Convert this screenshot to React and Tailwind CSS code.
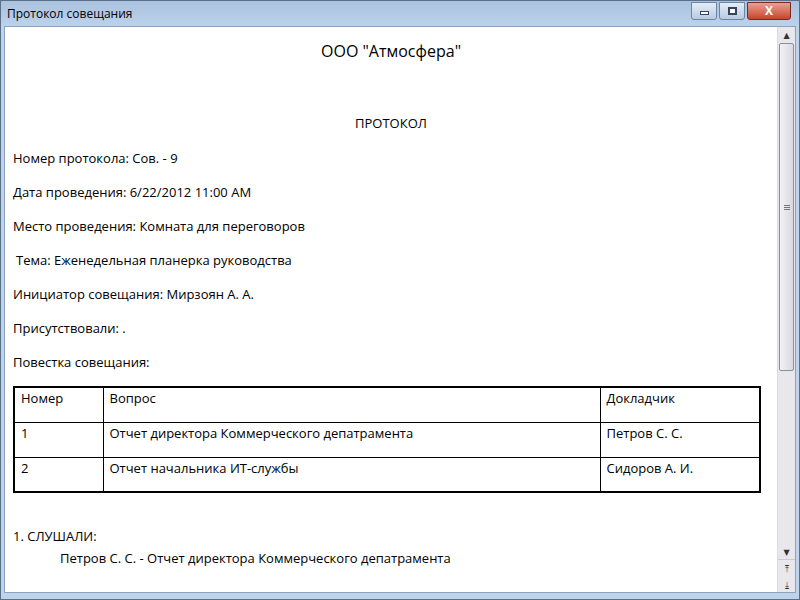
export default function App() {
  const f = { fontFamily: '"Open Sans", "DejaVu Sans", sans-serif' };
  const rows = [
    ["Номер", "Вопрос", "Докладчик"],
    ["1", "Отчет директора Коммерческого депатрамента", "Петров С. С."],
    ["2", "Отчет начальника ИТ-службы", "Сидоров А. И."],
  ];
  return (
    <div className="w-[800px] h-[600px] bg-[#bfd3ea] flex flex-col overflow-hidden border border-[#5a6f88]" style={f}>
      <div className="h-[25px] flex items-center justify-between pl-[6px] pr-[8px] bg-gradient-to-b from-[#a9c2de] to-[#bcd2ec] shrink-0">
        <span className="text-[12px] text-black">Протокол совещания</span>
        <div className="flex gap-[2px] -mt-[5px]">
          <div className="w-[26px] h-[18px] rounded-b-[3px] border border-[#6d86a3] bg-gradient-to-b from-[#e4edf7] to-[#b8cbe2] flex items-center justify-center">
            <div className="w-[9px] h-[4px] border border-[#33465c] bg-white mt-[4px]" />
          </div>
          <div className="w-[26px] h-[18px] rounded-b-[3px] border border-[#6d86a3] bg-gradient-to-b from-[#e4edf7] to-[#b8cbe2] flex items-center justify-center">
            <div className="w-[9px] h-[8px] border-2 border-[#33465c] bg-white" />
          </div>
          <div className="w-[44px] h-[18px] rounded-b-[3px] border border-[#7a2a1f] bg-gradient-to-b from-[#e8a08f] to-[#c6422d] flex items-center justify-center text-white font-bold text-[12px]">
            X
          </div>
        </div>
      </div>
      <div className="flex-1 flex mx-[3px] mb-[6px] border border-[#8aa2bf] min-h-0">
        <div className="flex-1 bg-white text-[13px] text-black pl-[8px] pr-[8px] relative overflow-hidden">
          <div className="text-center text-[16px] mt-[12px] leading-[24px]">ООО "Атмосфера"</div>
          <div className="text-center text-[13px] mt-[51px] leading-[18px]">ПРОТОКОЛ</div>
          <div className="mt-[17px] leading-[18px]">Номер протокола: Сов. - 9</div>
          <div className="mt-[16px] leading-[18px]">Дата проведения: 6/22/2012 11:00 AM</div>
          <div className="mt-[16px] leading-[18px]">Место проведения: Комната для переговоров</div>
          <div className="mt-[16px] leading-[18px] pl-[3px]">Тема: Еженедельная планерка руководства</div>
          <div className="mt-[16px] leading-[18px]">Инициатор совещания: Мирзоян А. А.</div>
          <div className="mt-[16px] leading-[18px]">Присутствовали: .</div>
          <div className="mt-[16px] leading-[18px]">Повестка совещания:</div>
          <table className="mt-[15px] w-[748px] border-collapse border-2 border-black">
            <tbody>
              {rows.map((r, i) => (
                <tr key={i} className="h-[35px] align-top">
                  <td className="border border-black w-[89px] px-[6px] pt-[1px]">{r[0]}</td>
                  <td className="border border-black w-[497px] px-[6px] pt-[1px]">{r[1]}</td>
                  <td className="border border-black px-[6px] pt-[1px]">{r[2]}</td>
                </tr>
              ))}
            </tbody>
          </table>
          <div className="mt-[34px] leading-[18px]">1. СЛУШАЛИ:</div>
          <div className="mt-[4px] leading-[18px] pl-[47px]">Петров С. С. - Отчет директора Коммерческого депатрамента</div>
        </div>
        <div className="w-[18px] bg-[#e8e8ec] flex flex-col items-center border-l border-[#dcdce0]">
          <div className="h-[16px] text-[8px] text-[#333] flex items-center">▲</div>
          <div className="w-[15px] h-[328px] rounded-[2px] border border-[#8a8f98] bg-gradient-to-r from-[#f2f3f5] to-[#d6d9df] flex items-center justify-center">
            <div className="flex flex-col gap-[1px]">
              <div className="w-[6px] h-[1px] bg-[#777]" />
              <div className="w-[6px] h-[1px] bg-[#777]" />
              <div className="w-[6px] h-[1px] bg-[#777]" />
            </div>
          </div>
          <div className="flex-1" />
          <div className="h-[14px] text-[8px] text-[#333] flex items-center">▼</div>
          <div className="w-full border-t border-[#c8ccd4]" />
          <div className="h-[16px] text-[9px] text-[#333] flex items-center leading-none">⤒</div>
          <div className="h-[16px] text-[9px] text-[#333] flex items-center leading-none">⤓</div>
        </div>
      </div>
    </div>
  );
}
